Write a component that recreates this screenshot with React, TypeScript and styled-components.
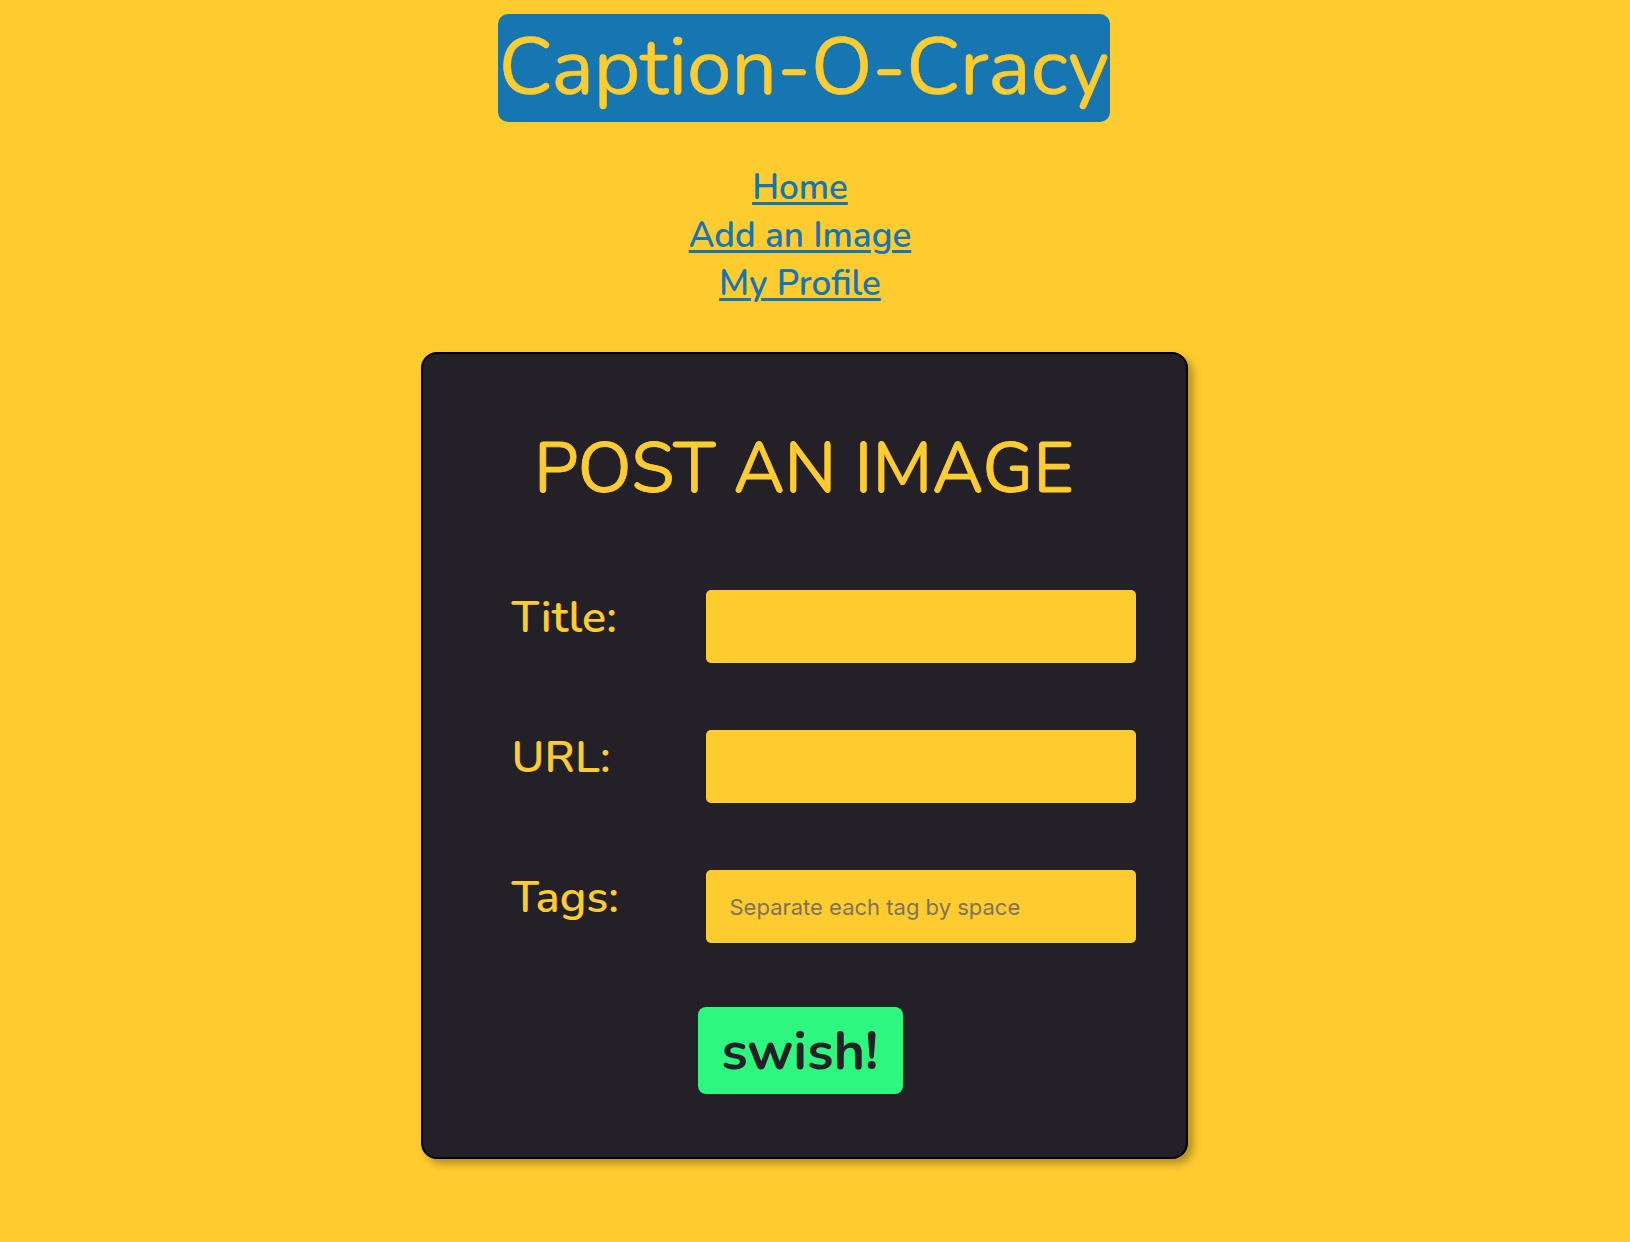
import React from "react";
import styled, { createGlobalStyle } from "styled-components";

const YELLOW = "#ffcc2f";
const BLUE = "#1676b2";
const DARK = "#232127";
const GREEN = "#2df77f";

const GlobalStyle = createGlobalStyle`
  html, body {
    margin: 0;
    padding: 0;
    background: ${YELLOW};
    font-family: "Nunito", Lato, "Open Sans", sans-serif;
  }
  * { box-sizing: border-box; }
`;

const Page = styled.div`
  display: flex;
  flex-direction: column;
  align-items: center;
  padding: 14px 22px 60px 0;
  min-height: 1242px;
`;

const Logo = styled.h1`
  margin: 0;
  display: inline-block;
  background: ${BLUE};
  color: ${YELLOW};
  font-size: 80px;
  font-weight: 400;
  line-height: 108px;
  border-radius: 10px;
  padding: 0 1px;
  -webkit-text-stroke: 0.6px ${YELLOW};
`;

const Nav = styled.nav`
  margin-top: 42px;
  display: flex;
  flex-direction: column;
  align-items: center;
  padding-right: 8px;
`;

const NavLink = styled.a`
  color: ${BLUE};
  font-size: 35px;
  font-weight: 600;
  line-height: 48px;
  text-decoration: underline;
  text-decoration-thickness: 3px;
  text-underline-offset: 3px;
  cursor: pointer;
`;

const Card = styled.form`
  margin-top: 44px;
  width: 767px;
  background: ${DARK};
  border: 2px solid #000;
  border-radius: 16px;
  box-shadow: 5px 5px 8px rgba(0, 0, 0, 0.3);
  display: flex;
  flex-direction: column;
  padding: 0 0 63px 89px;
`;

const Heading = styled.h2`
  margin: 73px 0 79px -89px;
  text-align: center;
  color: ${YELLOW};
  font-size: 70px;
  font-weight: 400;
  line-height: 84px;
  -webkit-text-stroke: 0.8px ${YELLOW};
`;

const Fields = styled.div`
  display: grid;
  grid-template-columns: 194px 430px;
  row-gap: 67px;
  align-items: start;
`;

const Label = styled.label`
  color: ${YELLOW};
  font-size: 45px;
  font-weight: 600;
  line-height: 55px;
`;

const Input = styled.input`
  height: 73px;
  width: 430px;
  background: ${YELLOW};
  border: none;
  border-radius: 5px;
  padding: 0 24px;
  font-family: Inter, "Noto Sans", sans-serif;
  font-size: 22px;
  color: #333;
  outline: none;
  &::placeholder {
    color: #7d7459;
  }
`;

const Submit = styled.button`
  margin: 64px 0 0 186px;
  align-self: flex-start;
  width: 205px;
  height: 87px;
  background: ${GREEN};
  color: ${DARK};
  border: none;
  border-radius: 8px;
  font-family: "Nunito", Lato, sans-serif;
  font-size: 54px;
  font-weight: 700;
  line-height: 1;
  cursor: pointer;
`;

export default function App() {
  return (
    <>
      <GlobalStyle />
      <Page>
        <Logo>Caption-O-Cracy</Logo>
        <Nav>
          <NavLink>Home</NavLink>
          <NavLink>Add an Image</NavLink>
          <NavLink>My Profile</NavLink>
        </Nav>
        <Card onSubmit={(e) => e.preventDefault()}>
          <Heading>POST AN IMAGE</Heading>
          <Fields>
            <Label htmlFor="title">Title:</Label>
            <Input id="title" type="text" />
            <Label htmlFor="url">URL:</Label>
            <Input id="url" type="text" />
            <Label htmlFor="tags">Tags:</Label>
            <Input id="tags" type="text" placeholder="Separate each tag by space" />
          </Fields>
          <Submit type="submit">swish!</Submit>
        </Card>
      </Page>
    </>
  );
}
